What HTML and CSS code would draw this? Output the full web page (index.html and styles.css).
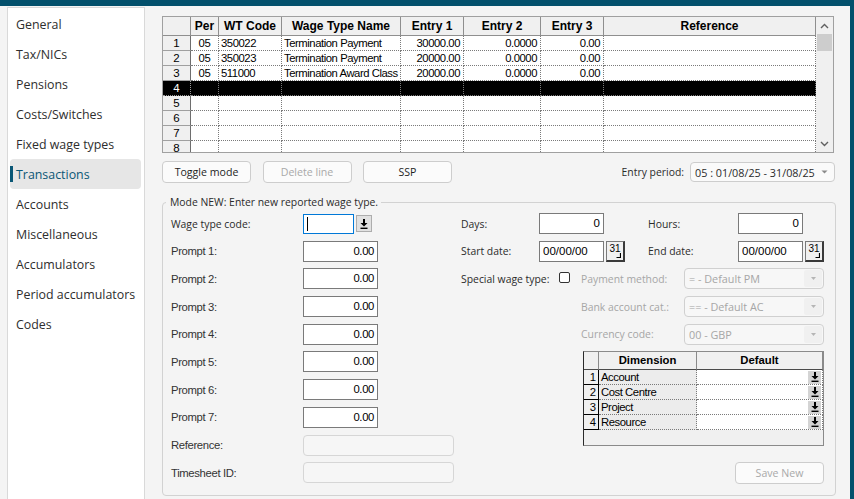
FILE: index.html
```html
<!DOCTYPE html>
<html lang="en">
<head>
<meta charset="utf-8">
<title>Transactions</title>
<link rel="stylesheet" href="styles.css">
</head>
<body>
<div class="frame">
  <nav class="sidebar">
    <div class="nav-item">General</div>
    <div class="nav-item">Tax/NICs</div>
    <div class="nav-item">Pensions</div>
    <div class="nav-item">Costs/Switches</div>
    <div class="nav-item">Fixed wage types</div>
    <div class="nav-item active">Transactions</div>
    <div class="nav-item">Accounts</div>
    <div class="nav-item">Miscellaneous</div>
    <div class="nav-item">Accumulators</div>
    <div class="nav-item">Period accumulators</div>
    <div class="nav-item">Codes</div>
  </nav>

  <main class="main">
    <div class="grid">
      <div class="grid-body">
        <div class="grow head">
          <div class="hc"></div><div class="hc">Per</div><div class="hc">WT Code</div><div class="hc">Wage Type Name</div><div class="hc">Entry 1</div><div class="hc">Entry 2</div><div class="hc">Entry 3</div><div class="hc">Reference</div>
        </div>
        <div class="grow">
          <div class="rh">1</div><div class="c ctr">05</div><div class="c">350022</div><div class="c">Termination Payment</div><div class="c num">30000.00</div><div class="c num">0.0000</div><div class="c num">0.00</div><div class="c"></div>
        </div>
        <div class="grow">
          <div class="rh">2</div><div class="c ctr">05</div><div class="c">350023</div><div class="c">Termination Payment</div><div class="c num">20000.00</div><div class="c num">0.0000</div><div class="c num">0.00</div><div class="c"></div>
        </div>
        <div class="grow">
          <div class="rh">3</div><div class="c ctr">05</div><div class="c">511000</div><div class="c">Termination Award Class</div><div class="c num">20000.00</div><div class="c num">0.0000</div><div class="c num">0.00</div><div class="c"></div>
        </div>
        <div class="grow sel">
          <div class="rh">4</div><div class="c"></div><div class="c"></div><div class="c"></div><div class="c"></div><div class="c"></div><div class="c"></div><div class="c"></div>
        </div>
        <div class="grow">
          <div class="rh">5</div><div class="c"></div><div class="c"></div><div class="c"></div><div class="c"></div><div class="c"></div><div class="c"></div><div class="c"></div>
        </div>
        <div class="grow">
          <div class="rh">6</div><div class="c"></div><div class="c"></div><div class="c"></div><div class="c"></div><div class="c"></div><div class="c"></div><div class="c"></div>
        </div>
        <div class="grow">
          <div class="rh">7</div><div class="c"></div><div class="c"></div><div class="c"></div><div class="c"></div><div class="c"></div><div class="c"></div><div class="c"></div>
        </div>
        <div class="grow">
          <div class="rh">8</div><div class="c"></div><div class="c"></div><div class="c"></div><div class="c"></div><div class="c"></div><div class="c"></div><div class="c"></div>
        </div>
      </div>
      <div class="vscroll">
        <div class="sb-btn"><svg width="9" height="6" viewBox="0 0 9 6"><path d="M1 5L4.5 1.5 8 5" fill="none" stroke="#606060" stroke-width="1.4"/></svg></div>
        <div class="sb-thumb"></div>
        <div class="sb-track"></div>
        <div class="sb-btn"><svg width="9" height="6" viewBox="0 0 9 6"><path d="M1 1L4.5 4.5 8 1" fill="none" stroke="#606060" stroke-width="1.4"/></svg></div>
      </div>
    </div>

    <div class="toolbar">
      <button class="btn">Toggle mode</button>
      <button class="btn" disabled>Delete line</button>
      <button class="btn">SSP</button>
      <div class="period">
        <span>Entry period:</span>
        <div class="combo"><span>05 : 01/08/25 - 31/08/25</span><svg width="7" height="4" viewBox="0 0 7 4"><path d="M0.5 0.5h6L3.5 3.5z" fill="#8a8a8a"/></svg></div>
      </div>
    </div>

    <fieldset class="group">
      <legend>Mode NEW: Enter new reported wage type.</legend>
      <div class="group-inner">
        <div class="lpanel">
          <span class="lbl">Wage type code:</span>
          <div class="wt">
            <div class="wt-in"><span class="text-caret"></span></div>
            <div class="wt-btn"><svg width="8" height="10" viewBox="0 0 8 10"><path d="M3 0h2v4h2.5L4 7.5 0.5 4H3z" fill="#000"/><rect x="0.5" y="8.6" width="7" height="1.4" fill="#000"/></svg></div>
          </div>
          <span class="albl">Prompt 1:</span><div class="num-in">0.00</div>
          <span class="albl">Prompt 2:</span><div class="num-in">0.00</div>
          <span class="albl">Prompt 3:</span><div class="num-in">0.00</div>
          <span class="albl">Prompt 4:</span><div class="num-in">0.00</div>
          <span class="albl">Prompt 5:</span><div class="num-in">0.00</div>
          <span class="albl">Prompt 6:</span><div class="num-in">0.00</div>
          <span class="albl">Prompt 7:</span><div class="num-in">0.00</div>
          <span class="albl">Reference:</span><div class="dis-in"></div>
          <span class="albl">Timesheet ID:</span><div class="dis-in"></div>
        </div>

        <div class="rpanel">
          <div class="rgrid1">
            <span class="lbl">Days:</span><div class="small-in">0</div>
            <span class="lbl">Hours:</span><div class="small-in">0</div>
            <span class="lbl">Start date:</span>
            <div class="date"><div class="small-in date-in">00/00/00</div><div class="cal"><span class="cal-n">31</span><svg class="cal-m" width="5" height="5" viewBox="0 0 5 5"><path d="M4.5 0v4.5H0.5" fill="none" stroke="#000" stroke-width="1.2"/></svg></div></div>
            <span class="lbl">End date:</span>
            <div class="date"><div class="small-in date-in">00/00/00</div><div class="cal"><span class="cal-n">31</span><svg class="cal-m" width="5" height="5" viewBox="0 0 5 5"><path d="M4.5 0v4.5H0.5" fill="none" stroke="#000" stroke-width="1.2"/></svg></div></div>
          </div>

          <div class="rgrid2">
            <span class="lbl">Special wage type:</span><span class="chk"></span>
            <span class="lbl dim-lbl">Payment method:</span>
            <div class="dd"><span>= - Default PM</span><span class="dd-btn"><svg width="5" height="3" viewBox="0 0 5 3"><path d="M0 0h5L2.5 3z" fill="#b5b5b5"/></svg></span></div>
            <span></span><span></span>
            <span class="lbl dim-lbl">Bank account cat.:</span>
            <div class="dd"><span>== - Default AC</span><span class="dd-btn"><svg width="5" height="3" viewBox="0 0 5 3"><path d="M0 0h5L2.5 3z" fill="#b5b5b5"/></svg></span></div>
            <span></span><span></span>
            <span class="lbl dim-lbl">Currency code:</span>
            <div class="dd"><span>00 - GBP</span><span class="dd-btn"><svg width="5" height="3" viewBox="0 0 5 3"><path d="M0 0h5L2.5 3z" fill="#b5b5b5"/></svg></span></div>
          </div>

          <div class="dim">
            <div class="drow dhead"><div class="dh"></div><div class="dh">Dimension</div><div class="dh">Default</div></div>
            <div class="drow"><div class="dn">1</div><div class="dname">Account</div><div class="ddef"><span class="ddrop"><svg width="8" height="10" viewBox="0 0 8 10"><path d="M3 0h2v4h2.5L4 7.5 0.5 4H3z" fill="#000"/><rect x="0.5" y="8.6" width="7" height="1.4" fill="#000"/></svg></span></div></div>
            <div class="drow"><div class="dn">2</div><div class="dname">Cost Centre</div><div class="ddef"><span class="ddrop"><svg width="8" height="10" viewBox="0 0 8 10"><path d="M3 0h2v4h2.5L4 7.5 0.5 4H3z" fill="#000"/><rect x="0.5" y="8.6" width="7" height="1.4" fill="#000"/></svg></span></div></div>
            <div class="drow"><div class="dn">3</div><div class="dname">Project</div><div class="ddef"><span class="ddrop"><svg width="8" height="10" viewBox="0 0 8 10"><path d="M3 0h2v4h2.5L4 7.5 0.5 4H3z" fill="#000"/><rect x="0.5" y="8.6" width="7" height="1.4" fill="#000"/></svg></span></div></div>
            <div class="drow"><div class="dn">4</div><div class="dname">Resource</div><div class="ddef"><span class="ddrop"><svg width="8" height="10" viewBox="0 0 8 10"><path d="M3 0h2v4h2.5L4 7.5 0.5 4H3z" fill="#000"/><rect x="0.5" y="8.6" width="7" height="1.4" fill="#000"/></svg></span></div></div>
          </div>

          <button class="btn save" disabled>Save New</button>
        </div>
      </div>
    </fieldset>
  </main>
</div>
</body>
</html>
```

FILE: styles.css
```css
* { box-sizing: border-box; }
html, body { margin: 0; padding: 0; }
body {
  background: #f4f4f4;
  font-family: "Open Sans", "Noto Sans", sans-serif;
  color: #2b2b2b;
}

.frame {
  width: 854px;
  height: 499px;
  display: flex;
  border-top: 6px solid #03506c;
  border-right: 4px solid #03506c;
  background: #f4f4f4;
  overflow: hidden;
}

/* Sidebar */
.sidebar {
  flex: none;
  width: 138px;
  margin: 1px 0 0 7px;
  padding-top: 1px;
  background: #fff;
  border: 1px solid #d9d9d9;
  border-bottom: 0;
}
.nav-item {
  position: relative;
  height: 30px;
  margin: 0 3px 0 2px;
  padding-left: 6px;
  display: flex;
  align-items: center;
  border-radius: 4px;
  font-size: 12.4px;
  color: #2e2e2e;
  white-space: nowrap;
}
.nav-item.active { background: #e6e6e6; color: #0a5776; }
.nav-item.active::before {
  content: "";
  position: absolute;
  left: 0;
  top: 7px;
  width: 3px;
  height: 16px;
  background: #0a5776;
}

/* Main */
.main {
  flex: 1;
  min-width: 0;
  padding: 10px 14px 0 17px;
}

/* Grid */
.grid {
  display: flex;
  width: 672px;
  height: 137px;
  border: 1px solid #a0a0a0;
  background: #fff;
  overflow: hidden;
  font-family: "Liberation Sans", Arial, sans-serif;
  color: #000;
}
.grid-body { flex: none; width: 653px; }
.grow {
  display: grid;
  grid-template-columns: 28px 28px 63px 119px 63px 77px 63px 212px;
  height: 15px;
}
.grow.head { height: 19px; }
.hc {
  background: #f0f0f0;
  border-right: 1px solid #8f8f8f;
  border-bottom: 1px solid #8f8f8f;
  font-weight: bold;
  font-size: 12px;
  line-height: 18px;
  text-align: center;
  white-space: nowrap;
  overflow: hidden;
}
.rh {
  background: #f0f0f0;
  border-right: 1px solid #6e6e6e;
  border-bottom: 1px solid #a0a0a0;
  font-size: 11.5px;
  line-height: 14px;
  text-align: center;
}
.c {
  border-right: 1px dotted #7a7a7a;
  border-bottom: 1px dotted #7a7a7a;
  font-size: 11.3px;
  letter-spacing: -0.45px;
  line-height: 14px;
  padding: 0 2px;
  white-space: nowrap;
  overflow: hidden;
}
.c.ctr { text-align: center; letter-spacing: -0.3px; }
.c.num { text-align: right; padding-right: 3px; }
.grow.sel .c, .grow.sel .rh { background: #000; color: #fff; }
.grow.sel .rh { border-right: 1px dotted #9a9a9a; border-bottom: 1px dotted #9a9a9a; }

.vscroll {
  flex: none;
  width: 17px;
  background: #f0f0f0;
  display: flex;
  flex-direction: column;
  align-items: center;
}
.sb-btn {
  flex: none;
  width: 17px;
  height: 17px;
  display: flex;
  align-items: center;
  justify-content: center;
}
.sb-thumb { flex: none; width: 15px; height: 17px; background: #cdcdcd; }
.sb-track { flex: 1; }

/* Toolbar */
.toolbar {
  display: flex;
  align-items: center;
  height: 22px;
  margin-top: 8px;
  gap: 11.5px;
  padding-right: 1px;
}
.btn {
  flex: none;
  width: 89px;
  height: 22px;
  padding: 0;
  border: 1px solid #cdcdcd;
  border-radius: 4px;
  background: #fbfbfb;
  font-family: "Open Sans", "Noto Sans", sans-serif;
  font-size: 10.6px;
  color: #1e1e1e;
}
.btn:disabled { color: #a9a9a9; }
.period {
  margin-left: auto;
  display: flex;
  align-items: center;
  gap: 6px;
  font-size: 10.4px;
  color: #2b2b2b;
}
.combo {
  width: 145px;
  height: 20px;
  display: flex;
  align-items: center;
  justify-content: space-between;
  padding: 0 6px 0 4px;
  border: 1px solid #cdcdcd;
  border-radius: 4px;
  background: #fafafa;
  font-size: 10.8px;
  color: #2b2b2b;
}

/* Group box */
.group {
  width: 674px;
  margin: 11px 0 0;
  padding: 3px 9px 11px 8px;
  border: 1px solid #d2d2d2;
  border-radius: 4px;
  min-width: 0;
}
.group legend {
  margin-left: -5px;
  padding: 0 3px 0 4px;
  font-size: 10.4px;
  line-height: 16px;
  color: #2b2b2b;
}
.group-inner { display: flex; }

.lbl { font-size: 10.4px; color: #2b2b2b; white-space: nowrap; }
.dim-lbl { color: #a6a6a6; }
.albl {
  font-family: "Liberation Sans", Arial, sans-serif;
  font-size: 11.3px;
  letter-spacing: -0.35px;
  color: #333;
  white-space: nowrap;
}

.lpanel {
  flex: none;
  width: 290px;
  display: grid;
  grid-template-columns: 132px 1fr;
  grid-auto-rows: 21px;
  row-gap: 6.7px;
  align-items: center;
}
.num-in {
  width: 75px;
  height: 21px;
  border: 1px solid #7a7a7a;
  background: #fff;
  text-align: right;
  padding-right: 3px;
  font-family: "Liberation Sans", Arial, sans-serif;
  font-size: 11.3px;
  letter-spacing: -0.35px;
  line-height: 19px;
  color: #000;
}
.dis-in {
  width: 151px;
  height: 21px;
  border: 1px solid #d6d6d6;
  border-radius: 4px;
  background: #f6f6f6;
}
.wt { display: flex; align-items: center; gap: 2px; height: 21px; }
.wt-in {
  width: 51px;
  height: 20px;
  border: 1px solid #0078d7;
  background: #fff;
  display: flex;
  align-items: center;
  padding-left: 3px;
}
.text-caret { width: 1px; height: 14px; background: #000; }
.wt-btn {
  width: 16px;
  height: 17px;
  background: #e1e1e1;
  border: 1px solid #adadad;
  display: flex;
  align-items: center;
  justify-content: center;
}

.rpanel {
  flex: none;
  width: 365px;
  display: flex;
  flex-direction: column;
}
.rgrid1 {
  display: grid;
  grid-template-columns: 78px 109px 90px 1fr;
  grid-auto-rows: 21px;
  row-gap: 6.7px;
  align-items: center;
}
.rgrid2 {
  margin-top: 6.7px;
  display: grid;
  grid-template-columns: 98px 22px 103px 140px;
  grid-auto-rows: 21px;
  row-gap: 6.7px;
  align-items: center;
}
.small-in {
  width: 65px;
  height: 21px;
  border: 1px solid #7a7a7a;
  background: #fff;
  padding: 0 3px;
  text-align: right;
  font-family: "Liberation Sans", Arial, sans-serif;
  font-size: 11.5px;
  line-height: 19px;
  color: #000;
}
.date { display: flex; align-items: center; gap: 2px; }
.date-in { text-align: left; }
.cal {
  width: 19px;
  height: 21px;
  background: #f0f0f0;
  border: 1px solid #7a7a7a;
  border-right: 2px solid #3a3a3a;
  border-bottom: 2px solid #3a3a3a;
  display: flex;
  flex-direction: column;
  align-items: center;
  padding-top: 2px;
}
.cal-n {
  font-family: "Liberation Sans", Arial, sans-serif;
  font-size: 10px;
  line-height: 10px;
  color: #000;
}
.cal-m { margin-left: 6px; margin-top: -1px; }
.chk {
  width: 11px;
  height: 11px;
  border: 1px solid #333;
  border-radius: 2px;
  background: #fff;
  margin-bottom: 3px;
}
.dd {
  width: 140px;
  height: 21px;
  border: 1px solid #d0d0d0;
  border-radius: 4px;
  background: #f7f7f7;
  display: flex;
  align-items: center;
  justify-content: space-between;
  padding: 1px 1px 1px 4px;
  font-size: 10.8px;
  color: #a6a6a6;
}
.dd-btn {
  width: 18px;
  height: 17px;
  background: #f0f0f0;
  border-radius: 2px;
  display: flex;
  align-items: center;
  justify-content: center;
}

/* Dimension table */
.dim {
  margin: 6.7px 0 0 122px;
  width: 241px;
  height: 95px;
  border: 1px solid #8a8a8a;
  border-left-color: #2a2a2a;
  background: #f0f0f0;
  font-family: "Liberation Sans", Arial, sans-serif;
  color: #000;
}
.drow {
  display: grid;
  grid-template-columns: 15px 98px 126px;
  height: 15px;
}
.drow.dhead { height: 18px; }
.dh {
  background: #f0f0f0;
  border-right: 1px solid #8a8a8a;
  border-bottom: 1px solid #4a4a4a;
  font-weight: bold;
  font-size: 11.3px;
  line-height: 17px;
  text-align: center;
}
.dn {
  background: #f0f0f0;
  border-right: 1px solid #000;
  border-bottom: 1px solid #000;
  font-size: 11.3px;
  line-height: 14px;
  text-align: right;
  padding-right: 2px;
}
.dname {
  background: #ececec;
  border-right: 1px dotted #7a7a7a;
  border-bottom: 1px dotted #7a7a7a;
  font-size: 11.3px;
  letter-spacing: -0.45px;
  line-height: 14px;
  padding-left: 2px;
  white-space: nowrap;
}
.ddef {
  background: #fff;
  border-right: 1px dotted #7a7a7a;
  border-bottom: 1px dotted #7a7a7a;
  display: flex;
  justify-content: flex-end;
  align-items: center;
  padding-right: 1px;
}
.ddrop {
  width: 13px;
  height: 13px;
  background: #d4d4d4;
  display: flex;
  align-items: center;
  justify-content: center;
}

.save {
  align-self: flex-end;
  margin: 15.8px 2px 0 0;
}
```
